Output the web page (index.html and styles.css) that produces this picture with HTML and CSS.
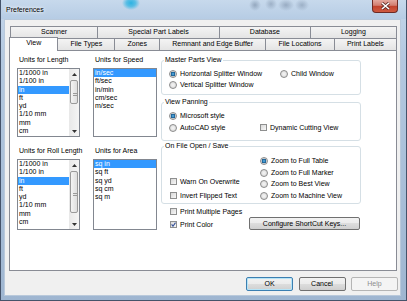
FILE: index.html
```html
<!DOCTYPE html>
<html lang="en">
<head>
  <meta charset="UTF-8">
  <title>Preferences</title>
  <link rel="stylesheet" href="styles.css">
</head>
<body>
  <div class="window">

    <!-- Title Bar -->
    <div class="titlebar">
      <span class="title">Preferences</span>
      <button class="close-button">
        <svg width="11" height="8" viewBox="0 0 11 8">
          <path d="M2 1 L9 7 M9 1 L2 7" stroke="#5a2a26" stroke-width="3"/>
          <path d="M2 1 L9 7 M9 1 L2 7" stroke="#fff" stroke-width="1.6"/>
        </svg>
      </button>
    </div>

    <div class="client">

      <!-- Tabs -->
      <div class="tabs">
        <div class="tab-row back">
          <div class="tab">Scanner</div>
          <div class="tab">Special Part Labels</div>
          <div class="tab">Database</div>
          <div class="tab">Logging</div>
        </div>
        <div class="tab-row front">
          <div class="tab active">View</div>
          <div class="tab">File Types</div>
          <div class="tab">Zones</div>
          <div class="tab">Remnant and Edge Buffer</div>
          <div class="tab">File Locations</div>
          <div class="tab">Print Labels</div>
        </div>
      </div>

      <!-- View Page -->
      <div class="panel">
        <div class="unit-lists">
          <div class="unit-group">
            <div class="caption">Units for Length</div>
            <div class="listbox">
              <ul class="items">
                <li>1/1000 in</li>
                <li>1/100 in</li>
                <li class="selected">in</li>
                <li>ft</li>
                <li>yd</li>
                <li>1/10 mm</li>
                <li>mm</li>
                <li>cm</li>
              </ul>
              <div class="scrollbar">
                <div class="arrow"><svg width="5" height="3" viewBox="0 0 5 3"><path d="M0 3 L2.5 0 L5 3 Z" fill="#333"/></svg></div>
                <div class="track"><div class="thumb"></div></div>
                <div class="arrow"><svg width="5" height="3" viewBox="0 0 5 3"><path d="M0 0 L2.5 3 L5 0 Z" fill="#333"/></svg></div>
              </div>
            </div>
          </div>

          <div class="unit-group">
            <div class="caption">Units for Speed</div>
            <div class="listbox">
              <ul class="items">
                <li class="selected">in/sec</li>
                <li>ft/sec</li>
                <li>in/min</li>
                <li>cm/sec</li>
                <li>m/sec</li>
              </ul>
            </div>
          </div>

          <div class="unit-group">
            <div class="caption">Units for Roll Length</div>
            <div class="listbox">
              <ul class="items">
                <li>1/1000 in</li>
                <li>1/100 in</li>
                <li class="selected">in</li>
                <li>ft</li>
                <li>yd</li>
                <li>1/10 mm</li>
                <li>mm</li>
                <li>cm</li>
              </ul>
              <div class="scrollbar">
                <div class="arrow"><svg width="5" height="3" viewBox="0 0 5 3"><path d="M0 3 L2.5 0 L5 3 Z" fill="#333"/></svg></div>
                <div class="track"><div class="thumb long"></div></div>
                <div class="arrow"><svg width="5" height="3" viewBox="0 0 5 3"><path d="M0 0 L2.5 3 L5 0 Z" fill="#333"/></svg></div>
              </div>
            </div>
          </div>

          <div class="unit-group">
            <div class="caption">Units for Area</div>
            <div class="listbox">
              <ul class="items">
                <li class="selected">sq in</li>
                <li>sq ft</li>
                <li>sq yd</li>
                <li>sq cm</li>
                <li>sq m</li>
              </ul>
            </div>
          </div>
        </div>

        <div class="settings">
          <fieldset class="group master">
            <legend>Master Parts View</legend>
            <div class="group-body">
              <label class="option"><span class="radio checked"></span>Horizontal Splitter Window</label>
              <label class="option"><span class="radio"></span>Child Window</label>
              <label class="option"><span class="radio"></span>Vertical Splitter Window</label>
            </div>
          </fieldset>

          <fieldset class="group panning">
            <legend>View Panning</legend>
            <div class="group-body">
              <label class="option"><span class="radio checked"></span>Microsoft style</label>
              <span></span>
              <label class="option"><span class="radio"></span>AutoCAD style</label>
              <label class="option"><span class="checkbox"></span>Dynamic Cutting View</label>
            </div>
          </fieldset>

          <fieldset class="group file-open">
            <legend>On File Open / Save</legend>
            <div class="group-body">
              <div class="check-column">
                <label class="option"><span class="checkbox"></span>Warn On Overwrite</label>
                <label class="option"><span class="checkbox"></span>Invert Flipped Text</label>
              </div>
              <div class="radio-column">
                <label class="option"><span class="radio checked"></span>Zoom to Full Table</label>
                <label class="option"><span class="radio"></span>Zoom to Full Marker</label>
                <label class="option"><span class="radio"></span>Zoom to Best View</label>
                <label class="option"><span class="radio"></span>Zoom to Machine View</label>
              </div>
            </div>
          </fieldset>

          <div class="print-row">
            <div class="check-column">
              <label class="option"><span class="checkbox"></span>Print Multiple Pages</label>
              <label class="option">
                <span class="checkbox"><svg width="5" height="5" viewBox="0 0 5 5"><path d="M0.6 2.4 L2 4.2 L4.5 0.6" stroke="#34519a" stroke-width="1.1" fill="none"/></svg></span>Print Color
              </label>
            </div>
            <button class="button shortcut">Configure ShortCut Keys...</button>
          </div>
        </div>
      </div>

      <!-- Dialog Buttons -->
      <div class="dialog-buttons">
        <button class="button default">OK</button>
        <button class="button">Cancel</button>
        <button class="button" disabled>Help</button>
      </div>
    </div>
  </div>
</body>
</html>
```

FILE: styles.css
```css
/* General Reset */
* {
  margin: 0;
  padding: 0;
  box-sizing: border-box;
}

body {
  font-family: "Liberation Sans", Arial, sans-serif;
  font-size: 7px;
  line-height: 8px;
  color: #000;
  background: #fff;
}

button {
  font: inherit;
  color: inherit;
}

/* Window Frame */
.window {
  width: 407px;
  height: 301px;
  display: flex;
  flex-direction: column;
  border: 1px solid #45536a;
  border-top: none;
  background: linear-gradient(180deg, #c4d6ea 0%, #b3c8e0 20%, #9fb6d1 100%);
}

.titlebar {
  height: 19px;
  display: flex;
  align-items: flex-start;
  padding-left: 5px;
  background:
    radial-gradient(ellipse 9px 7px at 130px 3px, #2cb3e2 0, rgba(44, 179, 226, 0.7) 50%, transparent 100%),
    radial-gradient(ellipse 6px 6px at 254px 5px, rgba(110, 130, 155, 0.55), transparent),
    radial-gradient(ellipse 6px 6px at 270px 4px, rgba(110, 130, 155, 0.45), transparent),
    radial-gradient(ellipse 8px 6px at 285px 5px, rgba(110, 130, 155, 0.5), transparent),
    radial-gradient(ellipse 7px 6px at 301px 5px, rgba(110, 130, 155, 0.45), transparent),
    linear-gradient(180deg, #c7d9ec, #b6cce4);
}

.title {
  padding-top: 6px;
  text-shadow: 0 0 3px #fff, 0 0 5px #fff;
}

.close-button {
  margin-left: auto;
  margin-right: 8px;
  width: 26px;
  height: 13px;
  display: flex;
  align-items: center;
  justify-content: center;
  border: 1px solid #6e2a24;
  border-top: none;
  border-radius: 0 0 4px 4px;
  background: linear-gradient(180deg, #e4a89e 0%, #d27d6f 45%, #c1412c 50%, #cf5a40 100%);
}

/* Client Area */
.client {
  flex: 1;
  margin: 0 5px 4px 3px;
  padding: 6px 3px 0 4px;
  background: #f0f0f0;
  border: 1px solid #b9c9db;
}

/* Tabs */
.tab-row {
  display: flex;
  height: 12px;
}

.tab-row.back {
  margin-left: 1px;
}

.tab {
  flex: 1 1 auto;
  height: 12px;
  padding: 1px 2px 0;
  margin-left: -1px;
  text-align: center;
  white-space: nowrap;
  border: 1px solid #898c95;
  border-bottom: none;
  background: linear-gradient(180deg, #f4f4f4, #e4e4e4);
}

.tab:first-child {
  margin-left: 0;
}

.tab.active {
  position: relative;
  z-index: 1;
  height: 14px;
  margin-top: -1px;
  padding: 1px 6px 0;
  background: #fff;
}

.panel {
  height: 221px;
  display: flex;
  gap: 4px;
  padding: 5px 0 0 7px;
  background: #fff;
  border: 1px solid #898c95;
}

/* Unit Lists */
.unit-lists {
  display: grid;
  grid-template-columns: 63px 64px;
  grid-template-rows: 81px 83px;
  column-gap: 13px;
  row-gap: 10px;
}

.unit-group {
  display: flex;
  flex-direction: column;
  min-width: 0;
}

.caption {
  height: 8px;
  padding-left: 2px;
  margin-bottom: 4px;
  white-space: nowrap;
}

.listbox {
  flex: 1;
  min-height: 0;
  display: flex;
  border: 1px solid #828790;
  background: #fff;
  overflow: hidden;
}

.items {
  flex: 1;
  list-style: none;
}

.items li {
  line-height: 8.3px;
  padding-left: 1px;
  white-space: nowrap;
}

.items li.selected {
  background: #3399ff;
  color: #fff;
}

.scrollbar {
  width: 10px;
  display: flex;
  flex-direction: column;
  background: linear-gradient(90deg, #e8e8e8, #f5f5f5);
}

.arrow {
  height: 10px;
  display: flex;
  align-items: center;
  justify-content: center;
}

.track {
  flex: 1;
  padding: 1px 1px 0;
}

.thumb {
  height: 24px;
  border: 1px solid #9a9a9a;
  border-radius: 2px;
  background:
    linear-gradient(180deg, transparent 0, transparent calc(50% + 1px), #9a9a9a calc(50% + 1px), #9a9a9a calc(50% + 2px), transparent calc(50% + 2px)) 2px 0 / 4px 100% no-repeat,
    linear-gradient(180deg, transparent calc(50% + 3px), #9a9a9a calc(50% + 3px), #9a9a9a calc(50% + 4px), transparent calc(50% + 4px)) 2px 0 / 4px 100% no-repeat,
    linear-gradient(90deg, #f4f4f4, #dedede);
}

.thumb.long {
  height: 42px;
}

/* Option Groups */
.settings {
  width: 200px;
  display: flex;
  flex-direction: column;
}

.group {
  border: 1px solid #d5dfe5;
  border-radius: 3px;
}

.group legend {
  margin-left: 2px;
  padding: 0 1px;
  line-height: 8px;
}

.group-body {
  padding-left: 7px;
}

.master .group-body {
  display: grid;
  grid-template-columns: 111px auto;
  padding-top: 4px;
  padding-bottom: 3px;
}

.panning {
  margin-top: 3px;
}

.panning .group-body {
  display: grid;
  grid-template-columns: 90px auto;
  padding-top: 4px;
  padding-bottom: 7px;
}

.file-open {
  margin-top: 1px;
}

.file-open .group-body {
  display: flex;
  padding-top: 5px;
  padding-bottom: 1px;
}

.check-column {
  display: flex;
  flex-direction: column;
  justify-content: flex-end;
  gap: 2.7px;
}

.file-open .check-column {
  width: 91px;
}

.option {
  height: 11.6px;
  display: flex;
  align-items: center;
  white-space: nowrap;
}

.radio {
  width: 8px;
  height: 8px;
  margin-right: 3px;
  border: 1px solid #8b8b8b;
  border-radius: 50%;
  background: radial-gradient(circle, #f6f6f6 0, #d4d4d4 100%);
}

.radio.checked {
  background:
    radial-gradient(circle, #6cc0ee 0, #1d6aa3 1.6px, #2a5f88 2.2px, transparent 2.6px),
    radial-gradient(circle, #f6f6f6 0, #d4d4d4 100%);
}

.checkbox {
  width: 7px;
  height: 7px;
  margin-left: 1px;
  margin-right: 3px;
  display: flex;
  align-items: center;
  justify-content: center;
  border: 1px solid #8e8f8f;
  background: linear-gradient(135deg, #d8d8d8, #f8f8f8);
}

.print-row {
  display: flex;
  align-items: flex-end;
  margin-top: 2px;
  padding-left: 8px;
}

.print-row .check-column {
  gap: 1.4px;
}

/* Buttons */
.button {
  height: 14px;
  border: 1px solid #707070;
  border-radius: 2px;
  background: linear-gradient(180deg, #f2f2f2 0%, #ebebeb 50%, #dddddd 50%, #cfcfcf 100%);
}

.button.shortcut {
  width: 111px;
  height: 13px;
  margin-left: auto;
  margin-right: 1px;
}

.dialog-buttons {
  display: flex;
  justify-content: flex-end;
  gap: 5.5px;
  margin-top: 6px;
  margin-right: -1px;
}

.dialog-buttons .button {
  width: 47px;
}

.button.default {
  border-color: #3c7fb1;
  box-shadow: inset 0 0 0 1px #b6e4f7;
}

.button:disabled {
  color: #8d8d8d;
  border-color: #b5b5b5;
  background: #f4f4f4;
}
```
